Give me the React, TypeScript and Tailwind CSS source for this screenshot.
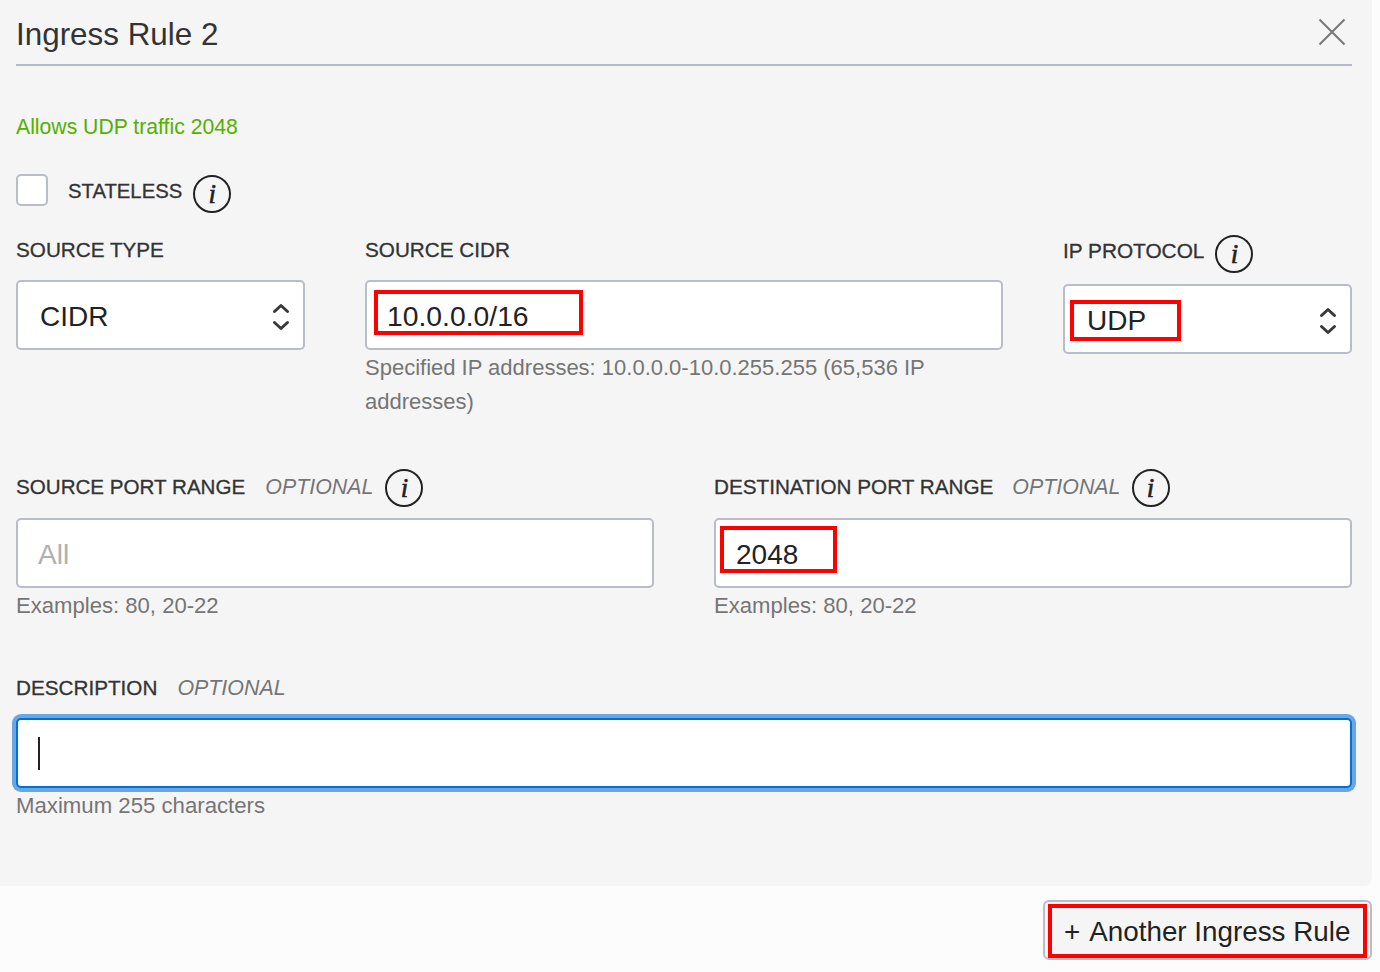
const sans = "font-['Liberation_Sans',Arial,sans-serif]";

function Info() {
  return (
    <span className="flex h-[38px] w-[38px] shrink-0 items-center justify-center rounded-full border-2 border-[#222222] bg-transparent font-['Liberation_Serif',serif] text-[27px] italic leading-none text-[#222222] [-webkit-text-stroke:0.6px_#222222]">
      i
    </span>
  );
}

function Chevrons() {
  return (
    <svg width="18" height="30" viewBox="0 0 18 30" fill="none" stroke="#3a3a3a" strokeWidth="3" strokeLinecap="round" strokeLinejoin="round" className="shrink-0">
      <path d="M2.5 9.5 L9 3.5 L15.5 9.5" />
      <path d="M2.5 20.5 L9 26.5 L15.5 20.5" />
    </svg>
  );
}

function Label({ children, className = "" }: { children: React.ReactNode; className?: string }) {
  return <span className={`leading-none text-[#333333] whitespace-nowrap [-webkit-text-stroke:0.3px_#333333] ${className}`}>{children}</span>;
}

function Optional({ className = "" }: { className?: string }) {
  return <span className={`text-[21.4px] italic leading-none text-[#757575] ${className}`}>OPTIONAL</span>;
}

function Mark({ className }: { className: string }) {
  return <span className={`pointer-events-none absolute border-4 border-[#ff0000] ${className}`} />;
}

const box = "relative flex h-[70px] items-center rounded-[5px] border-2 border-[#b8bdc8] bg-white pt-[4px] text-[28px] text-[#222222]";

export default function App() {
  return (
    <div className={`${sans} h-[972px] w-[1380px] overflow-hidden bg-[#fcfcfc]`}>
      <div className="h-[886px] w-[1372px] rounded-br-[8px] bg-[#f5f5f5] pl-4 pr-5">
        <div className="flex h-[66px] items-start justify-between border-b-2 border-[#b5bac5]">
          <h1 className="mt-[16px] text-[31.4px] font-normal leading-[38px] text-[#333333]">Ingress Rule 2</h1>
          <svg width="28" height="28" viewBox="0 0 28 28" fill="none" stroke="#777777" strokeWidth="2" className="mr-[6px] mt-[18px]">
            <path d="M1.5 1.5 L26.5 26.5 M26.5 1.5 L1.5 26.5" />
          </svg>
        </div>

        <p className="mt-[49px] text-[21.2px] leading-[24px] text-[#54b000]">Allows UDP traffic 2048</p>

        <div className="mt-[36px] flex h-[38px] items-center">
          <span className="mb-[8px] h-[32px] w-[32px] rounded-[5px] border-2 border-[#b8bdc8] bg-white" />
          <Label className="mb-[6px] ml-[20px] text-[20.3px]">STATELESS</Label>
          <span className="ml-[11px]"><Info /></span>
        </div>

        <div className="mt-[17px] grid grid-cols-[289px_638px_289px] gap-x-[60px]">
          <div>
            <div className="flex h-[38px] items-center"><Label className="mt-[2px] text-[20.7px]">SOURCE TYPE</Label></div>
            <div className={`${box} mt-[12px] justify-between pl-[22px] pr-[13px]`}>
              <span>CIDR</span>
              <Chevrons />
            </div>
          </div>
          <div>
            <div className="flex h-[38px] items-center"><Label className="mt-[2px] text-[20.7px]">SOURCE CIDR</Label></div>
            <div className={`${box} mt-[12px] pl-[20px]`}>
              <span className="mb-[2px] text-[28.3px]">10.0.0.0/16</span>
              <Mark className="left-[7px] top-[8px] h-[45px] w-[209px]" />
            </div>
            <p className="mt-[1px] text-[22px] leading-[34px] text-[#757575]">Specified IP addresses: 10.0.0.0-10.0.255.255 (65,536 IP addresses)</p>
          </div>
          <div className="pt-[5px]">
            <div className="flex h-[38px] items-center">
              <Label className="mb-[6px] text-[20.8px]">IP PROTOCOL</Label>
              <span className="ml-[11px]"><Info /></span>
            </div>
            <div className={`${box} mt-[11px] justify-between pl-[22px] pr-[13px]`}>
              <span>UDP</span>
              <Chevrons />
              <Mark className="left-[5px] top-[14px] h-[41px] w-[111px]" />
            </div>
          </div>
        </div>

        <div className="mt-[50px] grid grid-cols-2 gap-x-[60px]">
          <div>
            <div className="flex h-[38px] items-center">
              <Label className="mb-[2px] text-[20.6px]">SOURCE PORT RANGE</Label>
              <Optional className="ml-[20px]" />
              <span className="ml-[12px]"><Info /></span>
            </div>
            <div className={`${box} mt-[11px] pl-[20px] text-[#b0b0b0]`}>All</div>
            <p className="mt-[1px] text-[22.1px] leading-[34px] text-[#757575]">Examples: 80, 20-22</p>
          </div>
          <div>
            <div className="flex h-[38px] items-center">
              <Label className="mb-[2px] text-[20.7px]">DESTINATION PORT RANGE</Label>
              <Optional className="ml-[19px]" />
              <span className="ml-[11px]"><Info /></span>
            </div>
            <div className={`${box} mt-[11px] pl-[20px]`}>
              <span>2048</span>
              <Mark className="left-[4px] top-[6px] h-[47px] w-[117px]" />
            </div>
            <p className="mt-[1px] text-[22.1px] leading-[34px] text-[#757575]">Examples: 80, 20-22</p>
          </div>
        </div>

        <div className="mt-[45px] flex h-[38px] items-center">
          <Label className="mt-[2px] text-[20.7px]">DESCRIPTION</Label>
          <Optional className="ml-[20px] mt-[4px]" />
        </div>
        <div className="mt-[12px] flex h-[70px] items-center rounded-[5px] border-2 border-[#0072d6] bg-white pl-[20px] shadow-[0_0_0_4px_#6aa6e4]">
          <span className="h-[33px] w-[2px] bg-[#222222]" />
        </div>
        <p className="mt-[1px] text-[22.2px] leading-[34px] text-[#757575]">Maximum 255 characters</p>
      </div>

      <div className="flex h-[86px] w-[1372px] items-start justify-end pt-[14px]">
        <button className="relative flex h-[60px] w-[329px] items-center justify-start whitespace-nowrap rounded-[6px] border-2 border-[#b8bdc8] bg-[#f5f5f5] pl-[19px] pt-[4px] text-[27.8px] text-[#222222]">
          <span className="mr-[9px]">+</span>
          <span>Another Ingress Rule</span>
          <Mark className="left-[3px] top-[2px] h-[54px] w-[319px]" />
        </button>
      </div>
    </div>
  );
}
